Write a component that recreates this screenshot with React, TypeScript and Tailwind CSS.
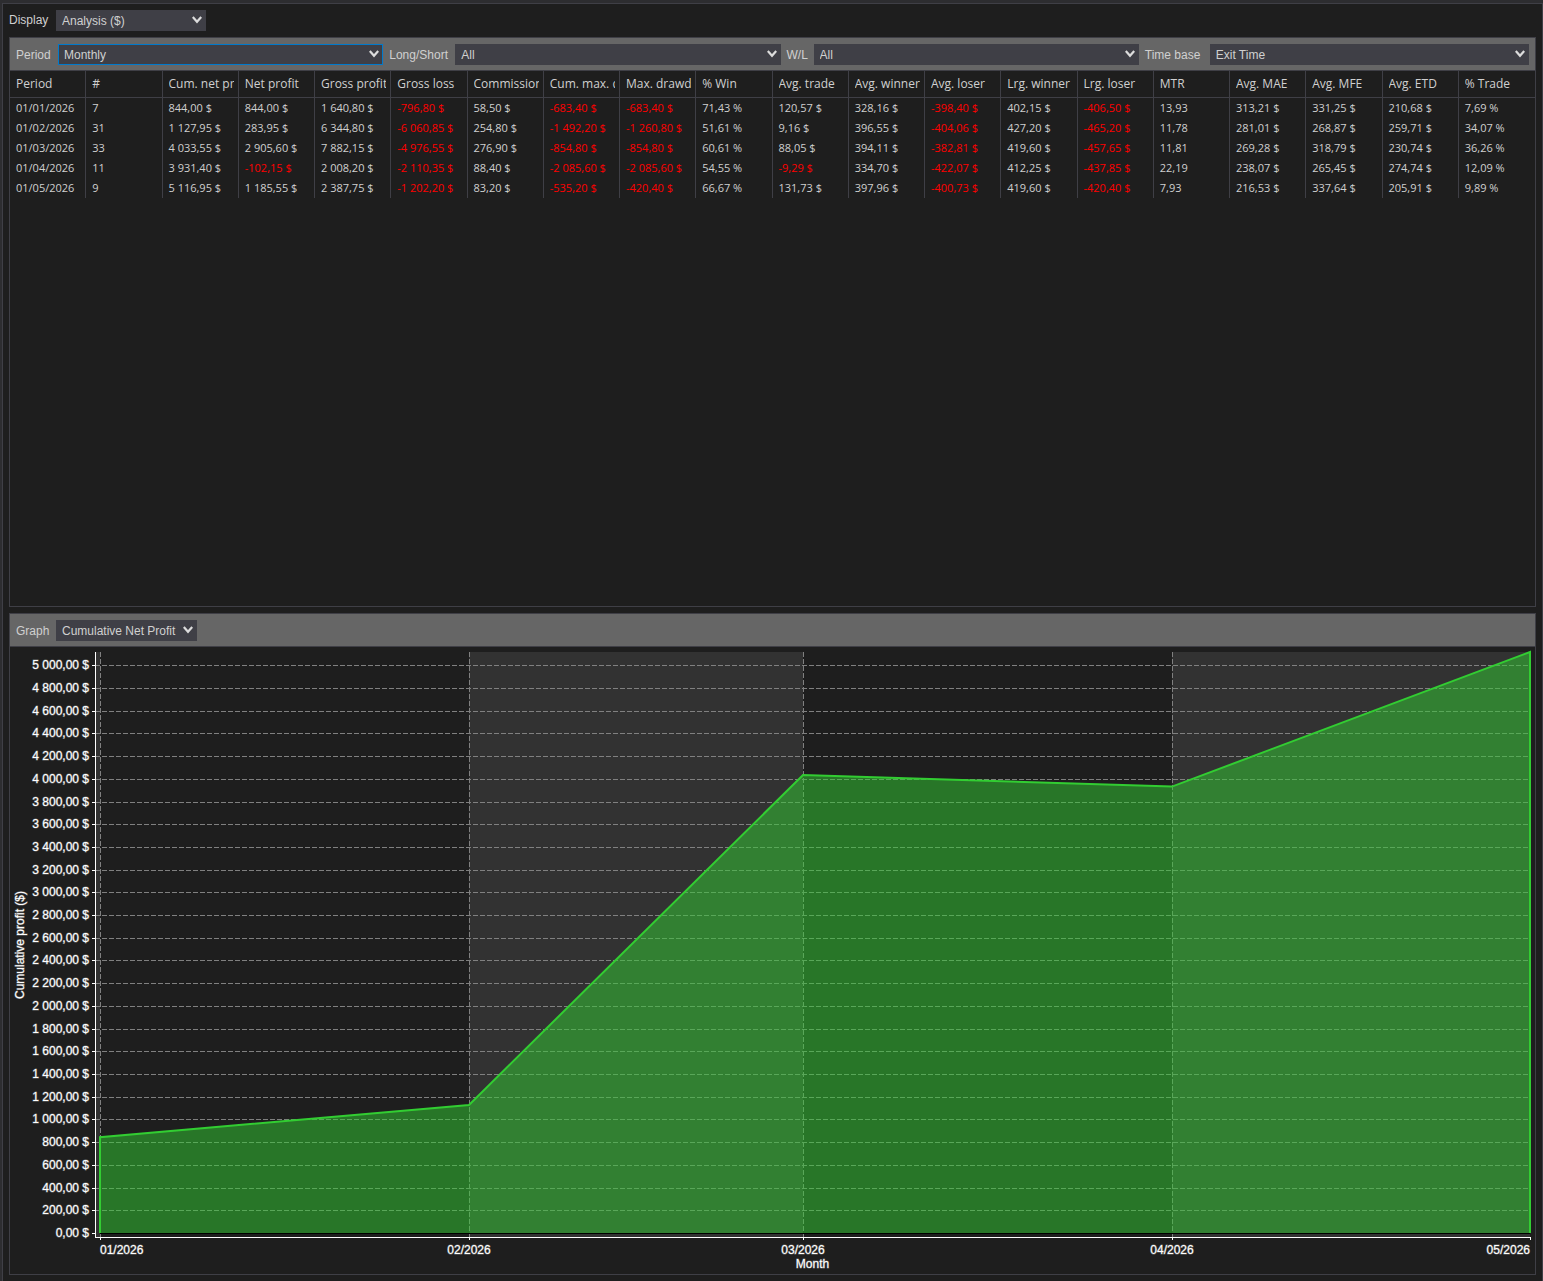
import { useLayoutEffect, useRef, useState } from 'react';
import type { ReactNode } from 'react';

type Month = {
  label: string;
  day: number;
  profit: number;
};

const columns = [
  'Period', '#', 'Cum. net profit', 'Net profit', 'Gross profit', 'Gross loss', 'Commission',
  'Cum. max. drawdown', 'Max. drawdown', '% Win', 'Avg. trade', 'Avg. winner', 'Avg. loser',
  'Lrg. winner', 'Lrg. loser', 'MTR', 'Avg. MAE', 'Avg. MFE', 'Avg. ETD', '% Trade',
];

const rows = [
  ['01/01/2026', '7', '844,00 $', '844,00 $', '1 640,80 $', '-796,80 $', '58,50 $', '-683,40 $', '-683,40 $', '71,43 %', '120,57 $', '328,16 $', '-398,40 $', '402,15 $', '-406,50 $', '13,93', '313,21 $', '331,25 $', '210,68 $', '7,69 %'],
  ['01/02/2026', '31', '1 127,95 $', '283,95 $', '6 344,80 $', '-6 060,85 $', '254,80 $', '-1 492,20 $', '-1 260,80 $', '51,61 %', '9,16 $', '396,55 $', '-404,06 $', '427,20 $', '-465,20 $', '11,78', '281,01 $', '268,87 $', '259,71 $', '34,07 %'],
  ['01/03/2026', '33', '4 033,55 $', '2 905,60 $', '7 882,15 $', '-4 976,55 $', '276,90 $', '-854,80 $', '-854,80 $', '60,61 %', '88,05 $', '394,11 $', '-382,81 $', '419,60 $', '-457,65 $', '11,81', '269,28 $', '318,79 $', '230,74 $', '36,26 %'],
  ['01/04/2026', '11', '3 931,40 $', '-102,15 $', '2 008,20 $', '-2 110,35 $', '88,40 $', '-2 085,60 $', '-2 085,60 $', '54,55 %', '-9,29 $', '334,70 $', '-422,07 $', '412,25 $', '-437,85 $', '22,19', '238,07 $', '265,45 $', '274,74 $', '12,09 %'],
  ['01/05/2026', '9', '5 116,95 $', '1 185,55 $', '2 387,75 $', '-1 202,20 $', '83,20 $', '-535,20 $', '-420,40 $', '66,67 %', '131,73 $', '397,96 $', '-400,73 $', '419,60 $', '-420,40 $', '7,93', '216,53 $', '337,64 $', '205,91 $', '9,89 %'],
];

// day = days since the first month, the time axis is linear
const months: Month[] = [
  { label: '01/2026', day: 0, profit: 844 },
  { label: '02/2026', day: 31, profit: 1127.95 },
  { label: '03/2026', day: 59, profit: 4033.55 },
  { label: '04/2026', day: 90, profit: 3931.4 },
  { label: '05/2026', day: 120, profit: 5116.95 },
];

const formatMoney = (value: number) =>
  `${String(value).replace(/\B(?=(\d{3})+$)/g, ' ')},00 $`;

type SelectProps = {
  id: string;
  options: string[];
  className?: string;
  focused?: boolean;
};

const Select = ({ id, options, className = '', focused = false }: SelectProps) => (
  <div className={`relative h-[21px] ${className}`}>
    <select
      id={id}
      className={`block h-full w-full appearance-none border bg-[#3f3f46] pl-[5px] pr-4 text-xs leading-4 text-[#d0d0d0] outline-none focus:border-[#007acc] ${
        focused ? 'border-[#007acc]' : 'border-[#3f3f46]'
      }`}
    >
      {options.map((option) => (
        <option key={option}>{option}</option>
      ))}
    </select>
    <svg className="pointer-events-none absolute right-1 top-1.5" width="10" height="8" viewBox="0 0 10 8">
      <path d="M0.8 1L5 5.8L9.2 1" fill="none" stroke="#dcdcdc" strokeWidth="2.2" />
    </svg>
  </div>
);

const Toolbar = ({ children }: { children: ReactNode }) => (
  <div className="flex h-[33px] gap-1.5 border-b border-[#3f3f46] bg-[#666666] pl-1.5 pt-1.5 leading-[22px]">
    {children}
  </div>
);

const AnalysisTable = () => (
  <table className="w-full table-fixed border-separate border-spacing-0 font-['Open_Sans',sans-serif] text-[#d0d0d0]">
    <thead>
      <tr className="h-[27px] text-xs">
        {columns.map((column) => (
          <th
            key={column}
            className="border-b border-r border-[#3f3f46] pl-1.5 pr-1 text-left font-normal last:border-r-0"
          >
            <div className="overflow-hidden whitespace-nowrap">{column}</div>
          </th>
        ))}
      </tr>
    </thead>
    <tbody>
      {rows.map((row) => (
        <tr key={row[0]} className="h-5 text-[11px] leading-4">
          {row.map((cell, index) => (
            <td
              key={columns[index]}
              className={`whitespace-nowrap border-r border-[#3f3f46] pl-1.5 pr-1 last:border-r-0 ${
                cell.startsWith('-') ? 'text-[#ff0000]' : ''
              }`}
            >
              {cell}
            </td>
          ))}
        </tr>
      ))}
    </tbody>
  </table>
);

const ProfitChart = () => {
  const ref = useRef<HTMLDivElement>(null);
  const [width, setWidth] = useState(1525);

  useLayoutEffect(() => {
    const element = ref.current;
    if (!element) return;
    const update = () => setWidth(element.clientWidth);
    update();
    const observer = new ResizeObserver(update);
    observer.observe(element);
    return () => observer.disconnect();
  }, []);

  const top = 5;
  const zero = 586;
  const axisX = 85;
  const axisY = 590;
  const left = 90;
  const right = width - 5;

  const x = (day: number) => Math.floor(left + ((right - left) * day) / 120);
  const y = (value: number) => zero - ((zero - top) * value) / 5116.95;

  const ticks = Array.from({ length: 26 }, (_, i) => i * 200);
  const line = months.map((m) => `${x(m.day)},${y(m.profit)}`).join(' ');
  const area = `${left},${zero} ${line} ${right},${zero}`;

  return (
    <div ref={ref} className="h-[627px] w-full overflow-hidden">
      <svg
        width={width}
        height={627}
        className="block font-['Liberation_Sans',Arial,sans-serif] text-xs"
        role="img"
        aria-label="Cumulative profit ($)"
      >
        {/* alternating month bands */}
        <g fill="#323232">
          <rect x={axisX} y={top} width={left - axisX} height={axisY - top} />
          <rect x={x(31)} y={top} width={x(59) - x(31)} height={axisY - top} />
          <rect x={x(90)} y={top} width={right - x(90)} height={axisY - top} />
        </g>

        <g stroke="#808080" strokeDasharray="5 2" shapeRendering="crispEdges">
          {ticks.slice(1).map((t) => (
            <line key={t} x1={axisX} x2={right} y1={Math.round(y(t)) + 0.5} y2={Math.round(y(t)) + 0.5} />
          ))}
          {months.slice(0, -1).map((m) => (
            <line key={m.label} x1={x(m.day) + 0.5} x2={x(m.day) + 0.5} y1={top} y2={axisY} />
          ))}
        </g>

        <polygon points={area} fill="#32cd32" fillOpacity="0.5" />
        <line x1={left} x2={right} y1={zero + 0.5} y2={zero + 0.5} stroke="#000000" />
        <polyline points={area} fill="none" stroke="#32cd32" strokeWidth="2" />

        <g stroke="#ffffff" shapeRendering="crispEdges">
          <line x1={axisX + 0.5} x2={axisX + 0.5} y1={top} y2={axisY + 1} />
          <line x1={axisX} x2={right + 1} y1={axisY + 0.5} y2={axisY + 0.5} />
          {ticks.map((t) => (
            <line key={t} x1={axisX - 3} x2={axisX} y1={Math.round(y(t)) + 0.5} y2={Math.round(y(t)) + 0.5} />
          ))}
          {months.map((m) => (
            <line key={m.label} x1={x(m.day) + 0.5} x2={x(m.day) + 0.5} y1={axisY} y2={axisY + 3} />
          ))}
        </g>

        <g fill="#ffffff" stroke="#ffffff" strokeOpacity="0.35">
          {ticks.map((t) => (
            <text key={t} x={79} y={Math.round(y(t)) + 4} textAnchor="end">
              {formatMoney(t)}
            </text>
          ))}
          {months.map((m, i) => (
            <text
              key={m.label}
              x={x(m.day)}
              y={607}
              textAnchor={i === 0 ? 'start' : i === months.length - 1 ? 'end' : 'middle'}
            >
              {m.label}
            </text>
          ))}
          <text x={(axisX + right) / 2} y={621} textAnchor="middle">
            Month
          </text>
          <text transform="translate(14 298) rotate(-90)" textAnchor="middle">
            Cumulative profit ($)
          </text>
        </g>
      </svg>
    </div>
  );
};

const App = () => {
  return (
    <div className="flex min-h-screen flex-col bg-[#2d2d30] pl-0.5 pt-[3px] font-['Liberation_Sans',Arial,sans-serif] text-xs text-[#d0d0d0]">
      <main className="flex flex-1 flex-col gap-1.5 border-x border-t border-[#3f3f46] bg-[#1e1e1e] p-1.5">
        <div className="flex gap-1.5 leading-[21px]">
          <label htmlFor="display" className="w-[41px]">Display</label>
          <Select id="display" className="w-[150px]" options={['Analysis ($)']} />
        </div>

        <section className="flex-1 border border-[#3f3f46]">
          <Toolbar>
            <label htmlFor="period" className="w-9 shrink-0">Period</label>
            <Select id="period" className="min-w-0 grow basis-1/5" options={['Monthly']} focused />
            <label htmlFor="long-short" className="w-[60px] shrink-0">Long/Short</label>
            <Select id="long-short" className="min-w-0 grow basis-1/5" options={['All']} />
            <label htmlFor="win-loss" className="w-[21px] shrink-0">W/L</label>
            <Select id="win-loss" className="min-w-0 grow basis-1/5" options={['All']} />
            <label htmlFor="time-base" className="w-[59px] shrink-0">Time base</label>
            <div className="min-w-0 grow basis-1/5 pr-1.5">
              <Select id="time-base" options={['Exit Time']} />
            </div>
          </Toolbar>
          <AnalysisTable />
        </section>

        <section className="border border-[#3f3f46]">
          <Toolbar>
            <label htmlFor="graph" className="w-[34px]">Graph</label>
            <Select id="graph" className="w-[141px]" options={['Cumulative Net Profit']} />
          </Toolbar>
          <ProfitChart />
        </section>
      </main>
    </div>
  );
};

export default App;
